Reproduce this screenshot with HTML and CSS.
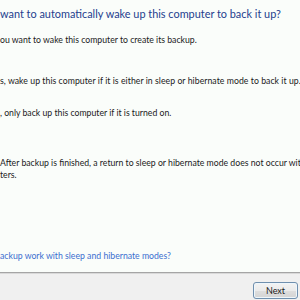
FILE: index.html
```html
<!DOCTYPE html>
<html>
<head>
<meta charset="utf-8">
<link rel="stylesheet" href="styles.css">
</head>
<body>
<div class="page">
  <main class="content">
    <h1 class="title">want to automatically wake up this computer to back it up?</h1>
    <p class="intro">ou want to wake this computer to create its backup.</p>
    <p class="opt opt-yes">s, wake up this computer if it is either in sleep or hibernate mode to back it up.</p>
    <p class="opt opt-no">, only back up this computer if it is turned on.</p>
    <p class="note">After backup is finished, a return to sleep or hibernate mode does not occur with<br>ters.</p>
    <div class="spacer"></div>
    <a class="help" href="#">ackup work with sleep and hibernate modes?</a>
  </main>
  <footer class="footer">
    <button class="btn">Next</button>
  </footer>
</div>
</body>
</html>
```
FILE: styles.css
```css
html, body {
  margin: 0;
  padding: 0;
  width: 300px;
  height: 300px;
  overflow: hidden;
}
body {
  font-family: Lato, "Open Sans", sans-serif;
  background: #fafdfa;
}
.page {
  display: flex;
  flex-direction: column;
  height: 300px;
}
.content {
  height: 272px;
  display: flex;
  flex-direction: column;
  padding-top: 6px;
  box-sizing: border-box;
  white-space: nowrap;
  overflow: hidden;
}
.title {
  margin: 0;
  font-weight: normal;
  font-size: 10.9px;
  line-height: 16px;
  color: #243d8e;
}
.intro, .opt, .note {
  margin: 0;
  font-size: 8.7px;
  line-height: 12px;
  color: #1a1a1a;
}
.intro { margin-top: 12px; }
.opt-yes { margin-top: 29px; letter-spacing: 0.05px; }
.opt-no { margin-top: 20px; }
.note { margin-top: 38px; }
.spacer { flex: 1; }
.help {
  font-size: 8.7px;
  line-height: 12px;
  color: #3a6fd0;
  text-decoration: none;
  margin-bottom: 10px;
}
.footer {
  flex: 1;
  background: #f0f0f0;
  border-top: 1px solid #a5a5a5;
  box-shadow: inset 0 1px 0 #d9d9d9;
  display: flex;
  justify-content: flex-end;
  align-items: flex-start;
  padding: 9px 2px 0 0;
}
.btn {
  width: 45px;
  height: 17px;
  padding: 0;
  font-family: Lato, "Open Sans", sans-serif;
  font-size: 9px;
  color: #1a1a1a;
  border: 1px solid #6f8fae;
  border-radius: 3px;
  background: linear-gradient(#f3f3f3 0%, #ebebeb 50%, #dedede 51%, #d4d4d4 100%);
  box-shadow: inset 0 0 0 1px #eef6fb;
}
```
